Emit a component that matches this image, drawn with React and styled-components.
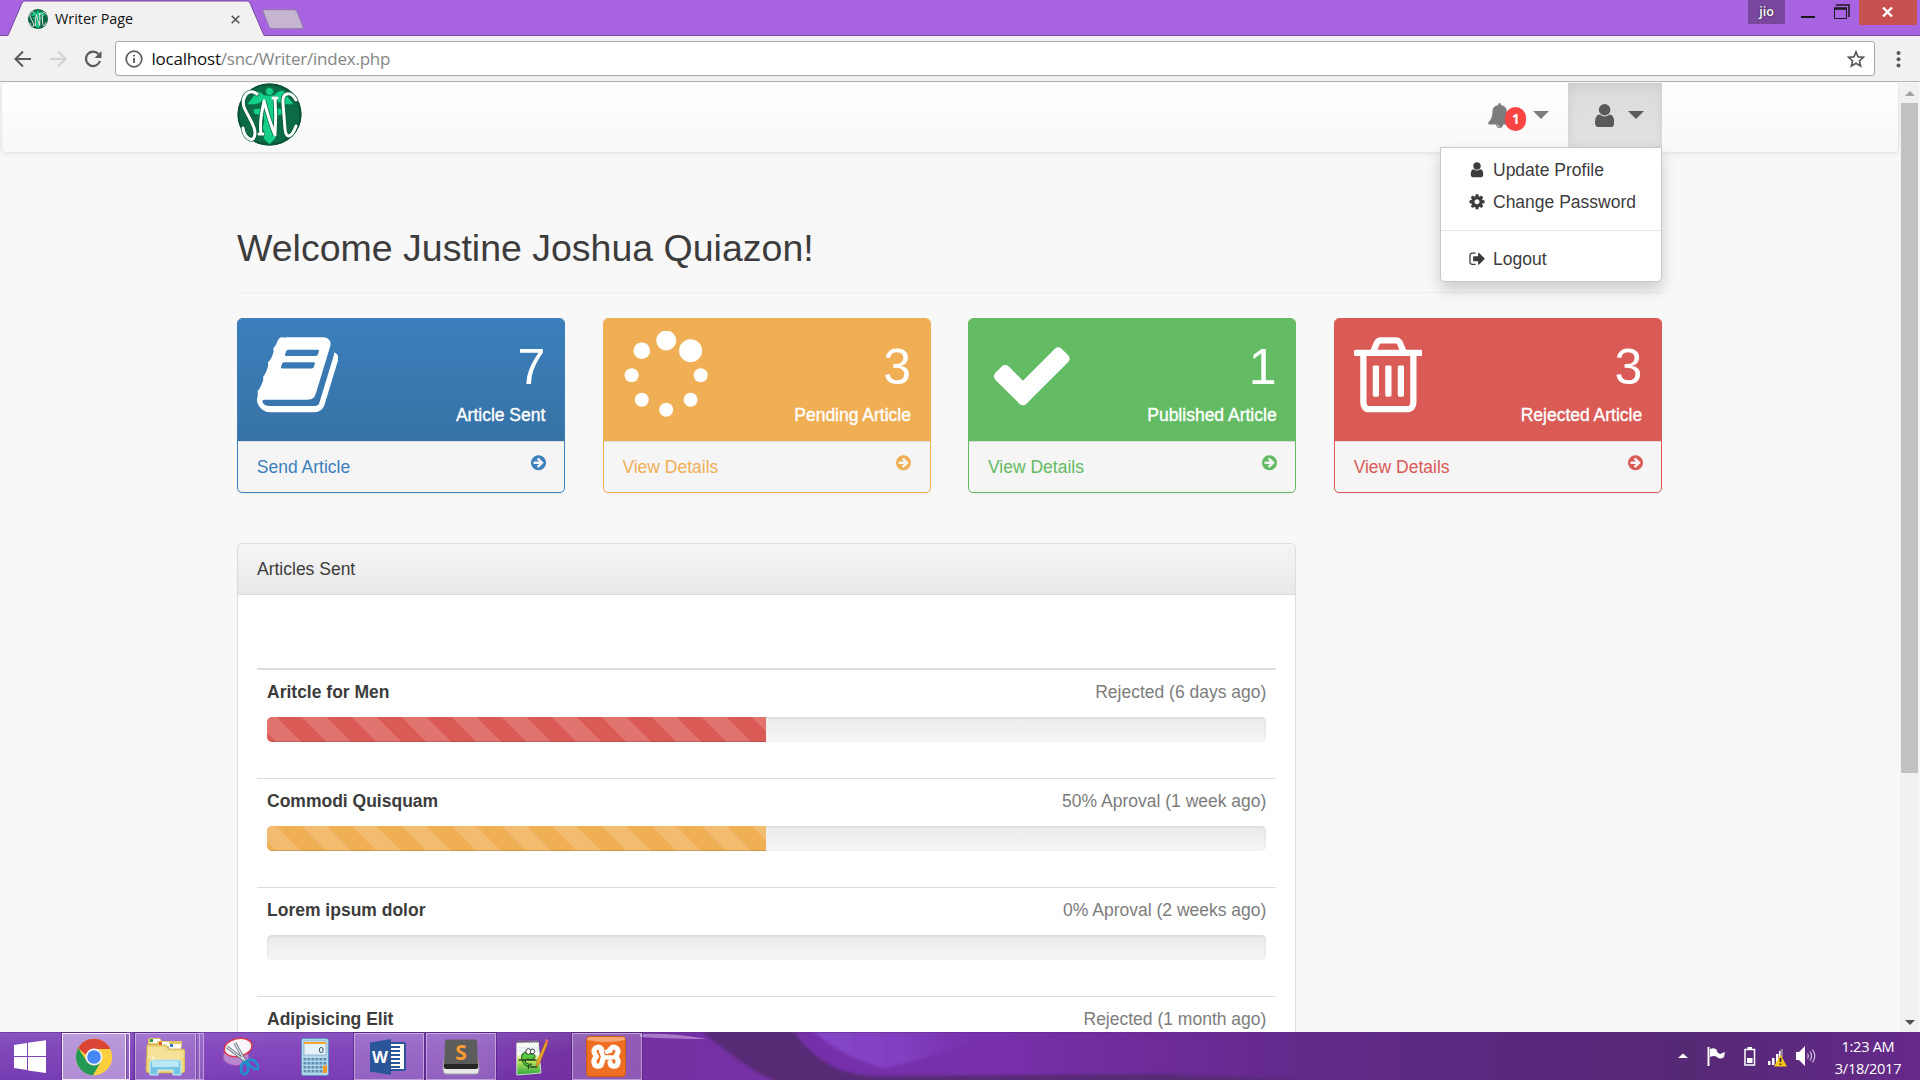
import React from "react";
import styled, { createGlobalStyle } from "styled-components";

const Global = createGlobalStyle`
  *, *::before, *::after { box-sizing: border-box; }
  html, body { margin: 0; padding: 0; overflow: hidden; }
  svg { display: block; flex: none; }
`;

const UI_FONT = `"Open Sans", "Noto Sans", sans-serif`;

const Screen = styled.div`
  width: 1920px;
  height: 1080px;
  display: flex;
  flex-direction: column;
  overflow: hidden;
  font-family: "Liberation Sans", Arial, sans-serif;
  font-size: 17.5px;
  line-height: 25px;
  color: #3c3c3c;
  background: #f8f8f8;
`;

/* ---------- browser window ---------- */

const TitleBar = styled.header`
  flex: none;
  height: 36px;
  display: flex;
  align-items: flex-start;
  background: #a864e0;
  box-shadow: inset 0 -1px 0 #7545a0;
`;

const Tab = styled.div`
  position: relative;
  width: 256px;
  height: 36px;
  margin-left: 8px;
  display: flex;
  align-items: center;
  padding: 2px 24px 0 20px;
`;

const TabShape = styled.svg`
  position: absolute;
  inset: 0;
`;

const TabContent = styled.div`
  position: relative;
  flex: 1;
  display: flex;
  align-items: center;
  font: 14.4px/20px ${UI_FONT};
  color: #111;
`;

const TabTitle = styled.span`
  margin-left: 7px;
  flex: 1;
  white-space: nowrap;
`;

const NewTab = styled.svg`
  margin: 9px 0 0 -3px;
`;

const WindowControls = styled.div`
  margin-left: auto;
  display: flex;
  align-items: flex-start;
  padding-right: 3px;
`;

const ProfileName = styled.div`
  width: 37px;
  height: 24px;
  background: #7a479f;
  color: #fff;
  font: 600 12.5px/23px ${UI_FONT};
  text-align: center;
  text-shadow: 0 0 2px #222;
`;

const ControlGap = styled.div`
  width: 74px;
  height: 24px;
  display: flex;
  align-items: flex-start;
  justify-content: space-between;
  padding: 4px 9px 0 16px;
`;

const CloseButton = styled.div`
  width: 58px;
  height: 25px;
  display: flex;
  align-items: center;
  justify-content: center;
  padding: 0 2px 2px 0;
  background: #c75050;
`;

const Toolbar = styled.div`
  flex: none;
  height: 46px;
  display: flex;
  align-items: center;
  padding: 0 10px 0 14px;
  background: #f2f1f2;
  border-bottom: 1px solid #b5b4b5;
`;

const NavButtons = styled.div`
  width: 101px;
  display: flex;
  gap: 17px;
  align-items: center;
`;

const Omnibox = styled.div`
  width: 1760px;
  height: 35px;
  display: flex;
  align-items: center;
  padding: 0 9px;
  background: #fff;
  border: 1px solid #a8a8a8;
  border-radius: 3px;
`;

const Url = styled.div`
  flex: 1;
  margin-left: 8.5px;
  font: 17px/24px ${UI_FONT};
  letter-spacing: -0.22px;
  color: #858585;
  b { font-weight: 400; color: #111; }
`;

const MenuDots = styled.svg`
  margin-left: 18px;
`;

const Viewport = styled.div`
  height: 950px;
  display: flex;
  overflow: hidden;
`;

const Page = styled.main`
  width: 1900px;
  padding: 0 1px 0 1px;
`;

const Scrollbar = styled.div`
  width: 19px;
  margin-top: 1px;
  display: flex;
  flex-direction: column;
  align-items: center;
  justify-content: space-between;
  background: #f1f1f1;
`;

const Thumb = styled.div`
  width: 17px;
  height: 670px;
  margin-bottom: auto;
  background: #c1c1c1;
`;

const ScrollArrow = styled.div`
  height: 20px;
  display: flex;
  align-items: center;
`;

/* ---------- site ---------- */

const Navbar = styled.nav`
  height: 71px;
  display: flex;
  justify-content: space-between;
  padding: 0 236px 0 235px;
  border: 1px solid #e7e7e7;
  border-top-color: #f4f4f4;
  border-radius: 5px;
  background: linear-gradient(#fff, #f8f8f8);
  box-shadow: 0 1px 6px rgba(0, 0, 0, 0.075);
`;

const NavRight = styled.div`
  position: relative;
  height: 64px;
  display: flex;
`;

const NavItem = styled.div`
  width: ${(p) => p.$width}px;
  height: 64px;
  display: flex;
  align-items: center;
  padding-left: ${(p) => p.$left}px;
  color: ${(p) => (p.$open ? "#5a5a5a" : "#7c7c7c")};
  background: ${(p) => (p.$open ? "linear-gradient(#dbdbdb, #e2e2e2)" : "none")};
  box-shadow: ${(p) => (p.$open ? "inset 0 3px 11px rgba(0,0,0,.075)" : "none")};
`;

const Badge = styled.span`
  width: 21px;
  height: 24px;
  margin: 8px 7px 0 -6px;
  position: relative;
  border-radius: 12px;
  background: #fa4343;
  color: #fff;
  font: 700 14px/23px ${UI_FONT};
  text-align: center;
`;

const Caret = styled.span`
  border: 8px solid transparent;
  border-top-color: currentColor;
  border-bottom: 0;
  margin-left: ${(p) => p.$left || 0}px;
`;

const Dropdown = styled.div`
  position: absolute;
  z-index: 5;
  right: 0;
  top: 64px;
  width: 222px;
  height: 135px;
  padding: 6px 0;
  background: #fff;
  border: 1px solid #c8c8c8;
  border-radius: 0 0 5px 5px;
  box-shadow: 0 8px 15px rgba(0, 0, 0, 0.175);
`;

const DropItem = styled.div`
  height: 32px;
  display: flex;
  align-items: center;
  padding-left: 26px;
  svg { width: 20px; margin-right: 6px; }
`;

const Divider = styled.div`
  height: 1px;
  margin: 12px 0;
  background: #e5e5e5;
`;

const Container = styled.div`
  width: 1425px;
  margin-left: 236px;
`;

const Heading = styled.h2`
  margin: 0;
  height: 140px;
  padding: 74px 0 0;
  border-bottom: 1px solid #eee;
  font-size: 37.5px;
  font-weight: 400;
  line-height: 42px;
`;

const CardRow = styled.div`
  display: grid;
  grid-template-columns: repeat(4, 1fr);
  gap: 37.5px;
  margin-top: 25px;
`;

const Card = styled.section`
  height: 175px;
  display: flex;
  flex-direction: column;
  border: 1px solid ${(p) => p.$color};
  border-radius: 5px;
  background: #f5f5f5;
  color: ${(p) => p.$color};
  box-shadow: 0 1px 2px rgba(0, 0, 0, 0.05);
  overflow: hidden;
`;

const CardTop = styled.div`
  height: 122px;
  display: flex;
  justify-content: space-between;
  padding: 11.5px 18.75px 0;
  background: ${(p) => p.$fill};
  color: #fff;
`;

const CardNumbers = styled.div`
  text-align: right;
  padding-top: 9.5px;
`;

const Count = styled.div`
  font-size: 50px;
  line-height: 55px;
`;

const CardLabel = styled.div`
  margin-top: 8px;
  -webkit-text-stroke: 0.35px #fff;
`;

const CardFooter = styled.div`
  flex: 1;
  display: flex;
  justify-content: space-between;
  padding: 12px 18.4px 0 18.75px;
  border-top: 1px solid #ddd;
  span { padding-top: 1px; }
`;

const Panel = styled.section`
  width: 1059.4px;
  height: 540px;
  margin-top: 50px;
  background: #fff;
  border: 1px solid #ddd;
  border-radius: 5px;
  box-shadow: 0 1px 2px rgba(0, 0, 0, 0.05);
`;

const PanelHeader = styled.div`
  height: 51px;
  padding: 13px 19px;
  border-bottom: 1px solid #ddd;
  border-radius: 4px 4px 0 0;
  background: linear-gradient(#f5f5f5, #e8e8e8);
`;

const List = styled.div`
  margin: 73px 19px 0;
`;

const Row = styled.article`
  height: 109px;
  padding: 10px 10px 0;
  border-top: 1px solid #ddd;
  &:first-child { height: 110px; border-top-width: 2px; }
`;

const RowHead = styled.div`
  display: flex;
  justify-content: space-between;
  color: #7c7c7c;
  strong { color: #3c3c3c; }
`;

const Track = styled.div`
  height: 25px;
  margin-top: 12px;
  border-radius: 5px;
  overflow: hidden;
  background: linear-gradient(#ebebeb, #f5f5f5);
  box-shadow: inset 0 1px 3px rgba(0, 0, 0, 0.1);
`;

const Fill = styled.div`
  width: ${(p) => p.$value}%;
  height: 100%;
  background-color: ${(p) => p.$color};
  background-image: linear-gradient(45deg, rgba(255,255,255,.15) 25%, transparent 25%, transparent 50%, rgba(255,255,255,.15) 50%, rgba(255,255,255,.15) 75%, transparent 75%);
  background-size: 50px 50px;
  background-position: -15px 0;
  box-shadow: inset 0 -1px 0 rgba(0, 0, 0, 0.15);
`;

/* ---------- taskbar ---------- */

const Taskbar = styled.footer`
  position: relative;
  flex: none;
  height: 48px;
  display: flex;
  overflow: hidden;
  color: #fff;
`;

const Wallpaper = styled.svg`
  position: absolute;
  inset: 0;
`;

const TaskItems = styled.div`
  position: relative;
  flex: 1;
  display: flex;
`;

const TaskButton = styled.div`
  width: ${(p) => p.$width || 70}px;
  height: 47px;
  margin: 1px ${(p) => p.$gap ?? 3}px 0 0;
  padding-right: ${(p) => p.$nudge || 0}px;
  display: flex;
  align-items: center;
  justify-content: center;
  background: ${(p) => (p.$active ? "rgba(255,255,255,.42)" : p.$open ? "rgba(255,255,255,.2)" : "none")};
  border: ${(p) => (p.$active ? "1.5px solid #f4ecfa" : p.$open ? "1px solid rgba(255,255,255,.4)" : "1px solid transparent")};
  box-shadow: ${(p) => (p.$active || p.$open ? "0 0 0 1px rgba(70,25,110,.55)" : "none")};
`;

const StackEdge = styled.div`
  width: 4px;
  height: 47px;
  margin: 1px ${(p) => p.$gap || 0}px 0 0;
  border: 1px solid ${(p) => (p.$active ? "#f4ecfa" : "rgba(255,255,255,.4)")};
  border-left: 0;
  background: rgba(255, 255, 255, 0.15);
`;

const Tray = styled.div`
  position: relative;
  display: flex;
  align-items: center;
  padding-right: 18px;
`;

const Clock = styled.div`
  width: 68px;
  margin-left: 17px;
  display: flex;
  flex-direction: column;
  align-items: center;
  white-space: nowrap;
  font: 14.6px/22px ${UI_FONT};
  letter-spacing: -0.3px;
  padding-top: 1px;
`;

/* ---------- icons ---------- */

const glyphs = {
  user: [256, 1280, "M1536 1399q0 109-62.5 187t-150.5 78h-854q-88 0-150.5-78t-62.5-187q0-85 8.5-160.5t31.5-152 58.5-131 94-89 134.5-34.5q131 128 313 128t313-128q76 0 134.5 34.5t94 89 58.5 131 31.5 152 8.5 160.5zm-256-887q0 159-112.5 271.5t-271.5 112.5-271.5-112.5-112.5-271.5 112.5-271.5 271.5-112.5 271.5 112.5 112.5 271.5z"],
  check: [0, 1792, "M1671 566q0 40-28 68l-724 724-136 136q-28 28-68 28t-68-28l-136-136-362-362q-28-28-28-68t28-68l136-136q28-28 68-28t68 28l294 295 656-657q28-28 68-28t68 28l136 136q28 28 28 68z"],
  trash: [192, 1408, "M704 736v576q0 14-9 23t-23 9h-64q-14 0-23-9t-9-23v-576q0-14 9-23t23-9h64q14 0 23 9t9 23zm256 0v576q0 14-9 23t-23 9h-64q-14 0-23-9t-9-23v-576q0-14 9-23t23-9h64q14 0 23 9t9 23zm256 0v576q0 14-9 23t-23 9h-64q-14 0-23-9t-9-23v-576q0-14 9-23t23-9h64q14 0 23 9t9 23zm128 724v-948h-896v948q0 22 7 40.5t14.5 27 10.5 8.5h832q3 0 10.5-8.5t14.5-27 7-40.5zm-672-1076h448l-48-117q-7-9-17-11h-317q-10 2-17 11zm928 32v64q0 14-9 23t-23 9h-96v948q0 83-47 143.5t-113 60.5h-832q-66 0-113-58.5t-47-141.5v-952h-96q-14 0-23-9t-9-23v-64q0-14 9-23t23-9h309l70-167q15-37 54-63t79-26h320q40 0 79 26t54 63l70 167h309q14 0 23 9t9 23z"],
  cog: [128, 1536, "M1152 896q0-106-75-181t-181-75-181 75-75 181 75 181 181 75 181-75 75-181zm512-109v222q0 12-8 23t-20 13l-185 28q-19 54-39 91 35 50 107 138 10 12 10 25t-9 23q-27 37-99 108t-94 71q-12 0-26-9l-138-108q-44 23-91 38-16 136-29 186-7 28-36 28h-222q-14 0-24.5-8.5t-11.5-21.5l-28-184q-49-16-90-37l-141 107q-10 9-25 9-14 0-25-11-126-114-165-168-7-10-7-23 0-12 8-23 15-21 51-66.5t54-70.5q-27-50-41-99l-183-27q-13-2-21-12.5t-8-23.5v-222q0-12 8-23t19-13l186-28q14-46 39-92-40-57-107-138-10-12-10-24 0-10 9-23 26-36 98.5-107.5t94.5-71.5q13 0 26 10l138 107q44-23 91-38 16-136 29-186 7-28 36-28h222q14 0 24.5 8.5t11.5 21.5l28 184q49 16 90 37l142-107q9-9 24-9 13 0 25 10 129 119 165 170 7 8 7 22 0 12-8 23-15 21-51 66.5t-54 70.5q26 50 41 98l183 28q13 2 21 12.5t8 23.5z"],
  signOut: [64, 1568, "M704 1440q0 4 1 20t.5 26.5-3 23.5-10 19.5-20.5 6.5h-320q-119 0-203.5-84.5t-84.5-203.5v-704q0-119 84.5-203.5t203.5-84.5h320q13 0 22.5 9.5t9.5 22.5q0 4 1 20t.5 26.5-3 23.5-10 19.5-20.5 6.5h-320q-66 0-113 47t-47 113v704q0 66 47 113t113 47h312l11.5 1 11.5 3 8 5.5 7 9 2 13.5zm928-544q0 26-19 45l-544 544q-19 19-45 19t-45-19-19-45v-288h-448q-26 0-45-19t-19-45v-384q0-26 19-45t45-19h448v-288q0-26 19-45t45-19 45 19l544 544q19 19 19 45z"],
  book: [64, 1664, "M1703 478q40 57 18 129l-275 906q-19 64-76.5 107.5t-122.5 43.5h-923q-77 0-148.5-53.5t-99.5-131.5q-24-67-2-127 0-4 3-27t4-37q1-8-3-21.5t-3-19.5q2-11 8-21t16.5-23.5 16.5-23.5q23-38 45-91.5t30-91.5q3-10 .5-30t-.5-28q3-11 17-28t17-23q21-36 42-92t25-90q1-9-2.5-32t.5-28q4-13 22-30.5t22-22.5q19-26 42.5-84.5t27.5-96.5q1-8-3-25.5t-2-26.5q2-8 9-18t18-23 17-21q8-12 16.5-30.5t15-35 16-36 19.5-32 26.5-23.5 36-11.5 47.5 5.5l-1 3q38-9 51-9h761q74 0 114 56t18 130l-274 906q-36 119-71.5 153.5t-128.5 34.5h-869q-27 0-38 15-11 16-1 43 24 70 144 70h923q29 0 56-15.5t35-41.5l300-987q7-22 5-57 38 15 59 43zm-1064 2q-4 13 2 22.5t20 9.5h608q13 0 25.5-9.5t16.5-22.5l21-64q4-13-2-22.5t-20-9.5h-608q-13 0-25.5 9.5t-16.5 22.5zm-83 256q-4 13 2 22.5t20 9.5h608q13 0 25.5-9.5t16.5-22.5l21-64q4-13-2-22.5t-20-9.5h-608q-13 0-25.5 9.5t-16.5 22.5z"],
  arrow: [128, 1536, "M1413 896q0-27-18-45l-91-91-362-362q-18-18-45-18t-45 18l-91 91q-18 18-18 45t18 45l189 189h-502q-26 0-45 19t-19 45v128q0 26 19 45t45 19h502l-189 189q-18 18-18 45t18 45l91 91q18 18 45 18t45-18l362-362 91-91q18-18 18-45zm251 0q0 209-103 385.5t-279.5 279.5-385.5 103-385.5-103-279.5-279.5-103-385.5 103-385.5 279.5-279.5 385.5-103 385.5 103 279.5 279.5 103 385.5z"],
  bell: [64, 1664, "M912 1696q0-16-16-16-59 0-101.5-42.5t-42.5-101.5q0-16-16-16t-16 16q0 73 51.5 124.5t124.5 51.5q16 0 16-16zm816-288q0 52-38 90t-90 38h-448q0 106-75 181t-181 75-181-75-75-181h-448q-52 0-90-38t-38-90q50-42 91-88t85-119.5 74.5-158.5 50-206 19.5-260q0-152 117-282.5t307-158.5q-8-19-8-39 0-40 28-68t68-28 68 28 28 68q0 20-8 39 190 28 307 158.5t117 282.5q0 139 19.5 260t50 206 74.5 158.5 85 119.5 91 88z"],
};

function Glyph({ name, size }) {
  const [x, w, d] = glyphs[name];
  return (
    <svg width={(size * w) / 1792} height={size} viewBox={`${x} 0 ${w} 1792`} fill="currentColor">
      <path d={d} />
    </svg>
  );
}

function Spinner() {
  const dots = [[41.2, 9.5, 10], [65.6, 19.7, 11.5], [16.8, 19.7, 8.3], [6.6, 44.2, 7], [75.7, 44.2, 7], [16.8, 68.7, 7], [65.6, 68.7, 7], [41.2, 78.7, 7]];
  return (
    <svg width="88" height="88" viewBox="-3 0 88 88" fill="currentColor">
      {dots.map(([x, y, r]) => <circle key={`${x}-${y}`} cx={x} cy={y} r={r} />)}
    </svg>
  );
}

function Logo({ width, height }) {
  return (
    <svg width={width} height={height} viewBox="0 0 65 63" preserveAspectRatio="none">
      <ellipse cx="32.5" cy="31.5" rx="32" ry="31" fill="#0c6b45" />
      <ellipse cx="32.5" cy="31.5" rx="31" ry="30" fill="none" stroke="#0a5236" strokeWidth="2" />
      <g fill="#15d089" stroke="#087048" strokeWidth="0.8">
        <path d="M27 12q-6-6-9-3-2 6-8 12 9 2 15-2 3-1 4 2l-5 4-8 1 1 5 9 2 1 5-2 7 3 6-2 4 5 5 1.500 1.500 1.500-1.500 5-5-2-4 3-6-2-7 1-5 9-2 1-5-8-1-5-4q1-3 4-2 8 4 17 2-6-6-9-12-4-4-11 3z" />
        <circle cx="32.500" cy="8.500" r="4" />
      </g>
      <g fill="none" stroke="#075537" strokeWidth="4.600" strokeLinecap="round" opacity=".8">
        <path d="M20 11C12 5 4 13 7 24c3 8 10 16 11 25 0 7-3 9-7 6q-4-3-5-10" />
        <path d="M24 51c-2-13 1-22 3-33 3 11 6 22 11 34 1-13 1-25 0-37" />
        <path d="M59 17C53 7 45 10 46 20l2 26c1 11 7 8 11-3" />
      </g>
      <g fill="none" stroke="#fff" strokeWidth="3" strokeLinecap="round" strokeLinejoin="round">
        <path d="M20 11C12 5 4 13 7 24c3 8 10 16 11 25 0 7-3 9-7 6q-4-3-5-10" />
        <path d="M22 51h4M24 51c-2-13 1-22 3-33 3 11 6 22 11 34 1-13 1-25 0-37M36 15h4" />
        <path d="M59 17C53 7 45 10 46 20l2 26c1 11 7 8 11-3" />
      </g>
    </svg>
  );
}

const WindowsIcon = () => (
  <svg width="34" height="34" viewBox="0 0 34 34" fill="#fff">
    <path d="M1 5l13-2v13H1zM15 2.800l18-2.600V16H15zM1 17h13v13L1 28zM15 17h18v16l-18-2.600z" />
  </svg>
);

const ChromeIcon = () => (
  <svg width="38" height="38" viewBox="0 0 38 38">
    <circle cx="19" cy="19" r="18.200" fill="#fccf3f" />
    <path d="M3.200 10A18.200 18.200 0 0 1 35.300 11H19a8.400 8.400 0 0 0-7.900 6z" fill="#db4437" />
    <path d="M3.200 10A18.200 18.200 0 0 0 18 37.200l8-14a8.400 8.400 0 0 1-14.500-.4z" fill="#229a56" />
    <circle cx="19" cy="19" r="8.500" fill="#f4f4f4" />
    <circle cx="19" cy="19" r="6.800" fill="#4587f3" />
  </svg>
);

const FolderIcon = () => (
  <svg width="40" height="40" viewBox="0 0 40 40">
    <path d="M3 6V3q0-2 2-2h10l2 3h20v6H3z" fill="#e5c667" />
    <path d="M5 2h10v4H5z" fill="#fff" /><path d="M5 2h3v3H5z" fill="#25984e" />
    <path d="M12 8V4h11l2 3v4z" fill="#e9cb70" /><path d="M14 5h10v4H14z" fill="#fff" /><path d="M14 5h3v3h-3z" fill="#e15335" />
    <path d="M24 7h12v5H24z" fill="#fff" /><path d="M25 7h3v3h-3z" fill="#2f82c5" />
    <path d="M2 8h19l3 4h14q2 0 2 2v19q0 3-3 3H4q-3 0-3-3z" fill="#efd67a" stroke="#c9a84c" strokeWidth=".8" />
    <path d="M3 10h17l3 4h15v8H3z" fill="#f8e9a8" opacity=".6" />
    <path d="M5 38V26q0-3 3-3h25q3 0 3 3v12h-8v-5H13v5z" fill="#75c5e2" stroke="#c9f2ff" strokeWidth="1" />
    <path d="M7 26q0-2 2-2h23q2 0 2 2v4H7z" fill="#b9e7f3" />
    <path d="M8 15l.6 5.500 5.400.5-5.400.5L8 27l-.6-5.500L2 21l5.400-.5z" fill="#fffbe0" opacity=".8" />
  </svg>
);

const SnipIcon = () => (
  <svg width="38" height="40" viewBox="0 0 38 40">
    <ellipse cx="14" cy="20" rx="13" ry="8.500" fill="#c08fd2" stroke="#a05bb5" opacity=".9" />
    <ellipse cx="16" cy="10.500" rx="14" ry="9" fill="#f8f5fa" stroke="#d93a49" strokeWidth="1.500" transform="rotate(-12 16 10)" />
    <path d="M13 6l11 20M5 10l21 16" stroke="#6b757f" strokeWidth="3" />
    <path d="M13 6l11 20M5 10l21 16" stroke="#dfe5ea" strokeWidth="1.300" />
    <path d="M22 25q-5 5-2 11 4 3 6-2 1-4-2-9zM25 24q6-4 10 3 3 6-2 5-5-2-8-8z" fill="none" stroke="#2090ce" strokeWidth="2.600" />
  </svg>
);

const CalculatorIcon = () => (
  <svg width="29" height="38" viewBox="0 0 29 38">
    <rect x=".5" y=".5" width="27" height="37" rx="2" fill="#b4d6ea" stroke="#5b93bd" />
    <rect x="3" y="3" width="22" height="14" fill="#e6f0f8" stroke="#7fa8c7" strokeWidth=".7" />
    <path d="M3 4h22v2H3z" fill="#f5a62b" />
    <rect x="18.500" y="9.500" width="3.500" height="5" rx="1.500" fill="none" stroke="#3d536e" />
    {[20, 24, 28, 32].map((y) => [2.5, 6.5, 10.5, 14.5, 18.5, 22.5].map((x) => (
      <rect key={`${x}-${y}`} x={x} y={y} width="2.800" height="2.500" fill="#5a8db1" />
    )))}
    <rect x="22" y="27.500" width="4" height="7.500" fill="#f29b26" />
  </svg>
);

const WordIcon = () => (
  <svg width="38" height="38" viewBox="0 0 38 38">
    <rect x="19" y="5" width="17" height="27" rx="1" fill="#fff" stroke="#2a5699" strokeWidth="2" />
    <path d="M20 9h11M20 13h11M20 17h11M20 21h11M20 25h11M20 29h11" stroke="#2a5699" strokeWidth="1.800" />
    <path d="M1 4.500L22 1v36L1 33.500z" fill="#2a5699" />
    <text x="11" y="24.800" textAnchor="middle" fontFamily="Open Sans" fontWeight="700" fontSize="16.500" fill="#fff">W</text>
  </svg>
);

const SublimeIcon = () => (
  <svg width="38" height="36" viewBox="0 0 38 36">
    <path d="M4 4h30l3 27q0 4-3 4H4q-3 0-3-4z" fill="#e9e9ea" stroke="#a3a1a7" />
    <path d="M5 .5h28q2 0 2 2L36 26H2L3 2.500q0-2 2-2z" fill="#5c5c5c" />
    <path d="M2 25h34v3q0 2-2 2H4q-2 0-2-2z" fill="#262626" />
    <text x="19" y="21" textAnchor="middle" fontFamily="Open Sans" fontWeight="700" fontSize="21" fill="#fa9b35">S</text>
  </svg>
);

const NotepadIcon = () => (
  <svg width="34" height="38" viewBox="0 0 38 38" preserveAspectRatio="none">
    <defs><linearGradient id="pad" x2="0" y2="1"><stop offset=".35" stopColor="#fafcf8" /><stop offset=".55" stopColor="#c4e75d" /><stop offset="1" stopColor="#2ba83f" /></linearGradient></defs>
    <path d="M2 5l24-1 3 31-27 2z" fill="url(#pad)" stroke="#d8dfda" />
    <path d="M3 3.500h23" stroke="#777" strokeWidth="3" strokeDasharray="1.500 1.500" />
    <path d="M4 10h22M4 13h22" stroke="#b8cce6" strokeWidth=".7" />
    <path d="M8 16q5-4 10 0 6 0 4 4-4 3-8 1-4 1-2 4 4 2 7 1-3 4-8 1-5-5-3-11z" fill="#55c83f" stroke="#1c4f20" strokeWidth="1" />
    <circle cx="15" cy="13.500" r="2.800" fill="#fff" stroke="#333" /><circle cx="19.500" cy="13.500" r="2.400" fill="#fff" stroke="#333" />
    <path d="M4 22h20M17 29h8M15 27v4" stroke="#293e22" strokeWidth="1.300" />
    <path d="M34 4l2.500 1-9 20-3.500 4 .5-5z" fill="#f2ae26" stroke="#a8651e" strokeWidth=".7" /><path d="M33.500 4l1-3 3 1-1 3.500z" fill="#e86c6c" />
  </svg>
);

const XamppIcon = () => (
  <svg width="40" height="41" viewBox="0 0 40 41">
    <rect x=".5" y=".5" width="39" height="40" rx="3.500" fill="#ee6f22" stroke="#cc5815" />
    <path d="M1 4q0-3 3-3h32q3 0 3 3Q20 8 1 4z" fill="#f6a673" />
    <g fill="none" stroke="#fff" strokeWidth="5.200" strokeLinecap="round" strokeLinejoin="round">
      <path d="M16 14.500c-1-5-8-4-8 1 0 2 1 3 2.500 5-2 2-3 4-2.500 6 1 5 7 5 8 0l1-4M24 14.500c1-5 8-4 8 1 0 2-1 3-2.500 5 2 2 3 4 2.500 6-1 5-7 5-8 0" />
      <path d="M15 15l2 5M24 14.500q-2 0-3 1.500M17 21.500h9" strokeWidth="4.400" />
    </g>
  </svg>
);

const TrayIcons = () => (
  <svg width="140" height="24" viewBox="0 0 140 24">
    <path d="M1 14l5-4.500 5 4.500z" fill="#fff" />
    <path d="M31.500 3v19" stroke="#fff" strokeWidth="2" />
    <path d="M33 5q4-2 7 1v2l3 2 5-2-1 5q-4 3-7 0-3-2-7 0z" fill="#fff" />
    <rect x="68" y="5.500" width="9.500" height="15.500" fill="none" stroke="#fff" strokeWidth="1.500" /><path d="M70.500 3h4.500v2h-4.500zM70 14h5.500v5H70z" fill="#fff" />
    <path d="M91 17h2.500v4H91zM95 14h2.500v7H95zM99 10h2.500v11H99zM102 7h2v7h-2z" fill="#fff" /><path d="M103.500 5h2.500v8h-2.500z" fill="#8d7c9b" />
    <path d="M103.500 10.500l6.500 12H97z" fill="#fcc61b" /><path d="M103.500 14v4M103.500 19.500v1.500" stroke="#222" strokeWidth="1.600" />
    <path d="M119 8h3l6-6v20l-6-6h-3z" fill="#fff" />
    <path d="M130.500 9.500q1.500 2.500 0 5M133 7.500q3 4.500 0 9M135.500 5.500q4.500 6.500 0 13" fill="none" stroke="#d9c9e8" strokeWidth="1.100" />
  </svg>
);

function TaskbarWallpaper() {
  return (
    <Wallpaper width="1920" height="48" viewBox="0 0 1920 48">
      <defs>
        <linearGradient id="base" x2="1" y2="0">
          <stop offset="0" stopColor="#8048b8" /><stop offset=".09" stopColor="#874bc0" /><stop offset=".24" stopColor="#8145b8" />
          <stop offset=".31" stopColor="#703098" /><stop offset=".38" stopColor="#7430a8" /><stop offset=".52" stopColor="#7830ac" />
          <stop offset=".6" stopColor="#6e2c99" /><stop offset=".68" stopColor="#62298a" /><stop offset=".8" stopColor="#59297c" /><stop offset=".88" stopColor="#562975" /><stop offset="1" stopColor="#65298a" />
        </linearGradient>
        <linearGradient id="shade" x2="0" y2="1"><stop offset="0" stopColor="#9d82d8" stopOpacity=".22" /><stop offset=".5" stopColor="#7028b0" stopOpacity=".12" /><stop offset="1" stopColor="#52189b" stopOpacity=".25" /></linearGradient>
        <linearGradient id="fade"><stop offset="0" stopColor="#8646c8" /><stop offset=".5" stopColor="#8040c0" /><stop offset="1" stopColor="#7830ac" stopOpacity="0" /></linearGradient>
        <filter id="soft"><feGaussianBlur stdDeviation="1.500" /></filter>
      </defs>
      <path d="M0 0h1920v48H0z" fill="url(#base)" />
      <path d="M0 0h640v48H0z" fill="url(#shade)" />
      <path d="M500 48q40-26 140-46 34 0 65 6l80 40z" fill="#7631a5" opacity=".8" filter="url(#soft)" />
      <path d="M640 2q34-1 67 5-30 0-67-2z" fill="#c8a3dc" opacity=".65" />
      <path d="M810 -4h190q-50 26-115 40-40-8-75-40z" fill="url(#fade)" filter="url(#soft)" />
      <path d="M698 -4h94q16 28 48 42 16 5 35 6l285-2 140 6v6H790q-26-8-44-21-22-15-48-37z" fill="#562975" filter="url(#soft)" />
      <path d="M0 .5h1920" stroke="#5f2c8a" strokeOpacity=".55" />
    </Wallpaper>
  );
}

/* ---------- data ---------- */

const cards = [
  { color: "#3b7fbc", fill: "linear-gradient(#3b7fbc, #3672a6)", icon: "book", count: 7, label: "Article Sent", link: "Send Article" },
  { color: "#f0af55", fill: "#f0af55", icon: "spinner", count: 3, label: "Pending Article", link: "View Details" },
  { color: "#63bb63", fill: "#63bb63", icon: "check", count: 1, label: "Published Article", link: "View Details" },
  { color: "#da5a55", fill: "#da5a55", icon: "trash", count: 3, label: "Rejected Article", link: "View Details" },
];

const articles = [
  { title: "Aritcle for Men", status: "Rejected (6 days ago)", value: 49.95, color: "#da5a55" },
  { title: "Commodi Quisquam", status: "50% Aproval (1 week ago)", value: 49.95, color: "#f0af55" },
  { title: "Lorem ipsum dolor", status: "0% Aproval (2 weeks ago)", value: 0, color: "#f0af55" },
  { title: "Adipisicing Elit", status: "Rejected (1 month ago)", value: 49.95, color: "#da5a55" },
];

function BrowserChrome() {
  return (
    <>
      <TitleBar>
        <Tab>
          <TabShape width="256" height="36">
            <path d="M0 35.500L14 3q1-2 3-2h222q2 0 3 2l14 32.500v.5H0z" fill="#f2f1f2" />
            <path d="M0 35.500L14 3q1-2 3-2h222q2 0 3 2l14 32.500" fill="none" stroke="#7545a0" strokeWidth="1" />
          </TabShape>
          <TabContent>
            <Logo width={20} height={20} />
            <TabTitle>Writer Page</TabTitle>
            <svg width="9" height="9" viewBox="0 0 9 9"><path d="M.7.7l7.600 7.600M8.300.7L.7 8.300" stroke="#555" strokeWidth="1.600" /></svg>
          </TabContent>
        </Tab>
        <NewTab width="44" height="21">
          <path d="M3 .7h30q2 0 3 2l6 15q1 2-1 2H12q-3 0-4-2L2 2.500Q1 .7 3 .7z" fill="#c6b5d2" stroke="#9278a8" strokeWidth="1" />
        </NewTab>
        <WindowControls>
          <ProfileName>jio</ProfileName>
          <ControlGap>
            <svg width="14" height="15"><path d="M0 13h14" stroke="#1a1a1a" strokeWidth="2" /></svg>
            <svg width="16" height="16" fill="none" stroke="#1a1a1a"><path d="M2 1h13v12" strokeWidth="1.500" /><path d="M.5 4v10.500h12V4" /><path d="M0 4.500h13" strokeWidth="2.500" /></svg>
          </ControlGap>
          <CloseButton>
            <svg width="11" height="10" viewBox="0 0 11 10"><path d="M1 .5l9 9M10 .5l-9 9" stroke="#fff" strokeWidth="2.400" /></svg>
          </CloseButton>
        </WindowControls>
      </TitleBar>
      <Toolbar>
        <NavButtons>
          <svg width="18" height="18" fill="none" stroke="#5a5a5a" strokeWidth="2"><path d="M17 9H2M9 1.500L1.500 9 9 16.500" /></svg>
          <svg width="18" height="18" fill="none" stroke="#d2d2d2" strokeWidth="2"><path d="M1 9h15M9 1.500L16.500 9 9 16.500" /></svg>
          <svg width="18" height="18" viewBox="0 0 18 18"><path d="M14.500 4A7.200 7.200 0 1 0 16 11" fill="none" stroke="#5a5a5a" strokeWidth="2.200" /><path d="M17.500 1v7h-7z" fill="#5a5a5a" /></svg>
        </NavButtons>
        <Omnibox>
          <svg width="18" height="18" viewBox="0 0 18 18"><circle cx="9" cy="9" r="7.800" fill="none" stroke="#5a5a5a" strokeWidth="1.700" /><path d="M8.100 8h1.800v5H8.100zM8.100 4.800h1.800v1.800H8.100z" fill="#5a5a5a" /></svg>
          <Url><b>localhost</b>/snc/Writer/index.php</Url>
          <svg width="18" height="18" viewBox="0 0 18 18"><path d="M9 1.900l2.100 5 5.300.4-4 3.500 1.200 5.200L9 13.200 4.400 16l1.200-5.200-4-3.500 5.300-.4z" fill="none" stroke="#5a5a5a" strokeWidth="1.600" /></svg>
        </Omnibox>
        <MenuDots width="12" height="18" fill="#5a5a5a"><circle cx="5.500" cy="3" r="2" /><circle cx="5.500" cy="9.200" r="2" /><circle cx="5.500" cy="15.400" r="2" /></MenuDots>
      </Toolbar>
    </>
  );
}

export default function App() {
  return (
    <Screen>
      <Global />
      <BrowserChrome />
      <Viewport>
        <Page>
          <Navbar>
            <Logo width={65} height={63} />
            <NavRight>
              <NavItem $width={80} $left={0}>
                <Glyph name="bell" size={25} />
                <Badge>1</Badge>
                <Caret />
              </NavItem>
              <NavItem $width={94} $left={26.5} $open>
                <Glyph name="user" size={27} />
                <Caret $left={14} />
              </NavItem>
              <Dropdown>
                <DropItem><Glyph name="user" size={17.5} />Update Profile</DropItem>
                <DropItem><Glyph name="cog" size={17.5} />Change Password</DropItem>
                <Divider />
                <DropItem><Glyph name="signOut" size={17.5} />Logout</DropItem>
              </Dropdown>
            </NavRight>
          </Navbar>
          <Container>
            <Heading>Welcome Justine Joshua Quiazon!</Heading>
            <CardRow>
              {cards.map((c) => (
                <Card key={c.label} $color={c.color}>
                  <CardTop $fill={c.fill}>
                    {c.icon === "spinner" ? <Spinner /> : <Glyph name={c.icon} size={87.5} />}
                    <CardNumbers>
                      <Count>{c.count}</Count>
                      <CardLabel>{c.label}</CardLabel>
                    </CardNumbers>
                  </CardTop>
                  <CardFooter>
                    <span>{c.link}</span>
                    <Glyph name="arrow" size={17.5} />
                  </CardFooter>
                </Card>
              ))}
            </CardRow>
            <Panel>
              <PanelHeader>Articles Sent</PanelHeader>
              <List>
                {articles.map((a) => (
                  <Row key={a.title}>
                    <RowHead><strong>{a.title}</strong><span>{a.status}</span></RowHead>
                    <Track><Fill $value={a.value} $color={a.color} /></Track>
                  </Row>
                ))}
              </List>
            </Panel>
          </Container>
        </Page>
        <Scrollbar>
          <ScrollArrow><svg width="10" height="5"><path d="M0 5l5-5 5 5z" fill="#a3a3a3" /></svg></ScrollArrow>
          <Thumb />
          <ScrollArrow><svg width="10" height="5"><path d="M0 0l5 5 5-5z" fill="#505050" /></svg></ScrollArrow>
        </Scrollbar>
      </Viewport>
      <Taskbar>
        <TaskbarWallpaper />
        <TaskItems>
          <TaskButton $width={60} $gap={2}><WindowsIcon /></TaskButton>
          <TaskButton $width={64} $gap={0} $active><ChromeIcon /></TaskButton>
          <StackEdge $active $gap={5} />
          <TaskButton $width={61} $gap={0} $nudge={2} $open><FolderIcon /></TaskButton>
          <StackEdge /><StackEdge $gap={3} />
          <TaskButton $nudge={3}><SnipIcon /></TaskButton>
          <TaskButton $gap={4}><CalculatorIcon /></TaskButton>
          <TaskButton $gap={2} $nudge={3} $open><WordIcon /></TaskButton>
          <TaskButton $nudge={1} $open><SublimeIcon /></TaskButton>
          <TaskButton $gap={3} $nudge={5}><NotepadIcon /></TaskButton>
          <TaskButton $nudge={2} $open><XamppIcon /></TaskButton>
        </TaskItems>
        <Tray>
          <TrayIcons />
          <Clock><span>1:23 AM</span><span>3/18/2017</span></Clock>
        </Tray>
      </Taskbar>
    </Screen>
  );
}
